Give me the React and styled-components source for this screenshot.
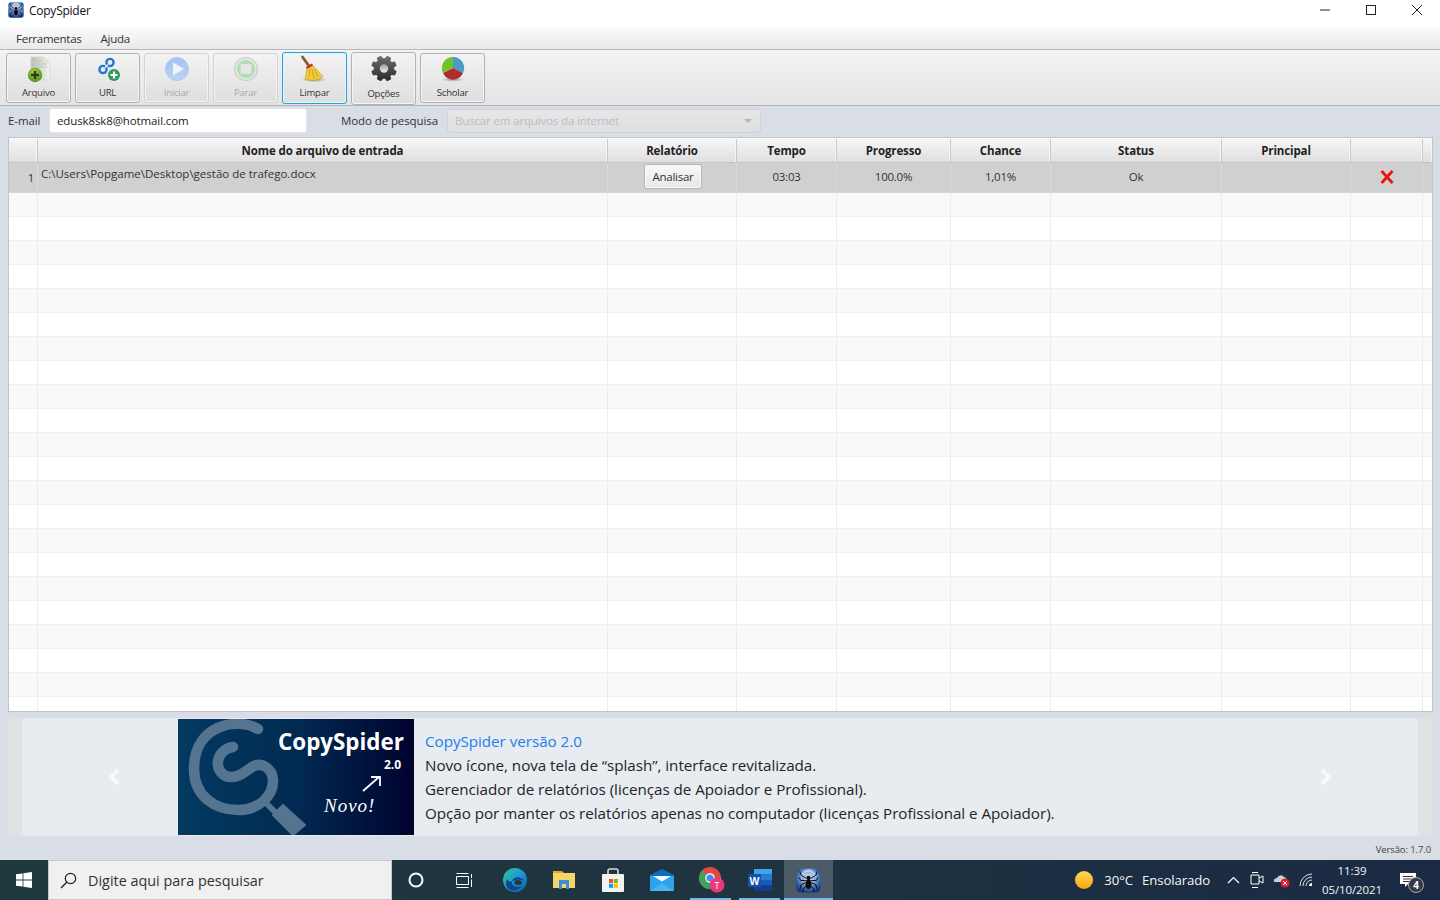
import React from "react";
import styled, { createGlobalStyle } from "styled-components";

const Global = createGlobalStyle`
  html, body { margin: 0; padding: 0; height: 100%; overflow: hidden; }
  * { box-sizing: border-box; }
  body { font-family: "Open Sans", "Noto Sans", "Liberation Sans", sans-serif; color: #333; }
`;

const Page = styled.div`
  width: 1440px; height: 900px; display: flex; flex-direction: column; background: #d9dde5; overflow: hidden;
`;
const TitleBar = styled.div`
  height: 28px; background: #fff; display: flex; align-items: center; padding-left: 8px; flex: none;
`;
const TitleText = styled.span`
  font-size: 12px; color: #111; margin-left: 5px; margin-top: -8px; letter-spacing: -0.25px;
`;
const AppIconWrap = styled.span`
  display: flex; margin-top: -8px;
`;
const WinControls = styled.div`
  margin-left: auto; display: flex; align-self: flex-start;
`;
const WinBtn = styled.span`
  width: 46px; height: 20px; display: flex; align-items: center; justify-content: center; color: #222;
`;
const MenuBar = styled.div`
  height: 22px; flex: none; display: flex; align-items: center; padding: 0 7px 0 16px; gap: 19px;
  background: linear-gradient(#fafafa, #e9e9e9); border-bottom: 1px solid #b8b8b8;
`;
const MenuItem = styled.span`
  font-size: 11.5px; color: #333; letter-spacing: -0.25px;
`;
const Toolbar = styled.div`
  height: 56px; flex: none; display: flex; align-items: flex-start; gap: 4px; padding: 3px 6px 0;
  background: linear-gradient(#f3f3f3, #e4e4e4); border-bottom: 1px solid #b4b4b4;
`;
const ToolBtn = styled.div`
  width: 65px; height: ${p => (p.$tall ? 53 : p.$focus ? 52 : 50)}px; margin-top: ${p => (p.$focus || p.$tall ? -1 : 0)}px;
  display: flex; flex-direction: column; align-items: center;
  border-radius: 3px; border: 1px solid ${p => (p.$focus ? "#1ea3dc" : p.$off ? "#d2d2d2" : "#b2b2b2")};
  box-shadow: ${p => (p.$focus ? "inset 0 0 0 1px #e8f4fa" : "inset 0 0 0 1px #f4f4f4")};
  background: linear-gradient(#f3f3f3, #dedede);
`;
const ToolIcon = styled.svg`
  display: block; flex: none; margin-top: ${p => (p.$shift ? 1 : 0)}px; opacity: ${p => (p.$off ? 0.7 : 1)};
`;
const ToolLabel = styled.span`
  font-size: 9.5px; letter-spacing: -0.2px; line-height: 12px; margin-top: ${p => (p.$low ? 2 : 1)}px; color: ${p => (p.$off ? "#a9a9a9" : "#333")};
`;
const FormRow = styled.div`
  height: 31px; flex: none; display: flex; align-items: center; padding: 2px 0 4px 8px;
`;
const FieldLabel = styled.span`
  font-size: 11.5px; color: #333; letter-spacing: -0.1px; width: ${p => p.$w}px; flex: none;
`;
const EmailInput = styled.div`
  width: 258px; height: 25px; flex: none; margin-right: 34px; background: #fff; border: 1px solid #e4e6ea; border-radius: 3px;
  font-size: 11.5px; letter-spacing: -0.12px; color: #222; padding-left: 7px; line-height: 23px;
`;
const Combo = styled.div`
  width: 314px; height: 24px; margin-top: 1px; flex: none; border-radius: 3px; border: 1px solid #d0d3d6;
  background: linear-gradient(#e6e7e9, #dcdedf); display: flex; align-items: center; justify-content: space-between;
  padding: 0 8px 1px 7px; font-size: 11.5px; color: #bcbdbf; letter-spacing: -0.15px;
`;
const Caret = styled.span`
  width: 0; height: 0; border-left: 4px solid transparent; border-right: 4px solid transparent; border-top: 4px solid #b4b6b8;
`;
const Table = styled.div`
  height: 575px; flex: none; margin: 0 7px 0 8px; border: 1px solid #c4c4c4; background: #fff; overflow: hidden;
`;
const Row = styled.div`
  display: flex; height: ${p => p.$h}px; background: ${p => p.$bg}; border-bottom: 1px solid ${p => p.$line};
`;
const HeadRow = styled(Row)`
  background: linear-gradient(#f6f6f6, #dfdfdf); border-top: 1px solid #fafafa; border-bottom: 1px solid #c6c6c6;
`;
const HeadCell = styled.div`
  width: ${p => p.$w}px; flex: none; border-right: 1px solid #c9c9c9; font-weight: 700; font-size: 11.5px; letter-spacing: -0.12px;
  color: #222; display: flex; align-items: center; justify-content: center; box-shadow: inset -1px 0 0 #f5f5f5;
`;
const Cell = styled.div`
  width: ${p => p.$w}px; flex: none; border-right: 1px solid ${p => p.$line}; font-size: 11.5px; letter-spacing: -0.25px; color: #333;
  display: flex; align-items: center; justify-content: center;
`;
const DataCell = styled(Cell)`
  padding-bottom: 2px;
`;
const IndexCell = styled(Cell)`
  justify-content: flex-end; padding: 0 3px 1px 0;
`;
const PathCell = styled(Cell)`
  justify-content: flex-start; align-items: flex-start; padding: 3px 0 0 3px; letter-spacing: 0;
`;
const SmallBtn = styled.div`
  width: 58px; height: 25px; margin-left: 2px; border: 1px solid #b5b5b5; border-radius: 3px; background: linear-gradient(#f8f8f8, #e7e7e7);
  box-shadow: inset 0 0 0 1px #fbfbfb; display: flex; align-items: center; justify-content: center; font-size: 11.5px; letter-spacing: -0.25px; color: #333;
`;
const CarouselWrap = styled.div`
  height: 118px; flex: none; margin: 6px 8px 0 8px; padding: 0 14px; background: #e0e1e2; display: flex;
`;
const Carousel = styled.div`
  flex: 1; background: #e8ebef; border-radius: 5px; display: flex; align-items: center; position: relative; padding-left: 156px;
`;
const Arrow = styled.svg`
  position: absolute; top: 50px; ${p => (p.$right ? "right: 85px;" : "left: 85px;")}
`;
const Banner = styled.svg`
  display: block; flex: none; margin-right: 11px;
`;
const Notes = styled.div`
  font-size: 15.2px; line-height: 24px; color: #212529; letter-spacing: -0.03px;
`;
const NoteTitle = styled.div`
  color: #1a7ff0;
`;
const Version = styled.div`
  height: 24px; flex: none; display: flex; justify-content: flex-end; align-items: flex-end; padding: 0 9px 4px 0;
  font-size: 9.5px; color: #444; letter-spacing: -0.1px;
`;
const Taskbar = styled.div`
  height: 40px; flex: none; display: flex; align-items: center;
  background: linear-gradient(90deg, #1f3a3f 0%, #1f3340 50%, #1a2a44 100%);
`;
const TaskSlot = styled.div`
  width: ${p => p.$w || 48}px; height: 40px; flex: none; display: flex; align-items: center; justify-content: center; position: relative;
  padding-left: ${p => p.$nudge || 0}px;
  background: ${p => (p.$active ? "rgba(255,255,255,0.2)" : "transparent")};
  ${p => p.$bar && `&::after { content: ""; position: absolute; bottom: 0; height: 2px; background: #76b9ed; left: ${p.$active ? 0 : 4}px; right: ${p.$active ? 0 : 4}px; }`}
`;
const SearchBox = styled.div`
  width: 344px; height: 40px; flex: none; background: #f0f0f0; border: 1px solid #c8c8c8; display: flex; align-items: center; padding-left: 11px;
  font-size: 14.4px; color: #333; gap: 11px;
`;
const Tray = styled.div`
  margin-left: auto; display: flex; align-items: center; height: 40px; color: #fff;
`;
const Weather = styled.span`
  font-size: 13.2px; letter-spacing: -0.1px; margin-left: ${p => p.$ml}px; color: #f4f4f4; white-space: nowrap;
`;
const TrayIcon = styled.span`
  display: flex; margin-left: ${p => p.$ml}px;
`;
const Clock = styled.div`
  width: 70px; margin-left: 4px; text-align: center; font-size: 11.5px; line-height: 19px; letter-spacing: -0.1px; color: #f4f4f4;
`;
const Notif = styled.div`
  margin-left: 13px; margin-right: 24px; position: relative; display: flex;
`;
const Badge = styled.span`
  position: absolute; right: -8px; bottom: -6px; width: 16px; height: 16px; border-radius: 50%; background: #333a45; border: 1px solid #aaa;
  font-size: 10px; font-weight: 700; line-height: 14px; text-align: center; color: #fff;
`;

const COLS = [29, 570, 129, 100, 114, 100, 171, 129, 72, 10];
const HEADS = ["", "Nome do arquivo de entrada", "Relatório", "Tempo", "Progresso", "Chance", "Status", "Principal", "", ""];
const LINE = "#dadada";

function gearPath(cx, cy, ro, ri, n) {
  const pts = [];
  for (let i = 0; i < n; i++) {
    const a = (i / n) * Math.PI * 2 + Math.PI / 8;
    const s = (Math.PI * 2) / n;
    [[-0.34, ri], [-0.2, ro], [0.2, ro], [0.34, ri]].forEach(([k, r]) => {
      const t = a + k * s;
      pts.push(`${(cx + Math.cos(t) * r).toFixed(2)},${(cy + Math.sin(t) * r).toFixed(2)}`);
    });
  }
  return `M${pts.join("L")}Z`;
}

const Spider = ({ s = 16 }) => (
  <svg width={s} height={s} viewBox="0 0 24 24">
    <defs>
      <radialGradient id={`sp${s}`} cx="50%" cy="38%" r="62%">
        <stop offset="0" stopColor="#e6eefa" />
        <stop offset="0.55" stopColor="#6c94d2" />
        <stop offset="1" stopColor="#123a80" />
      </radialGradient>
    </defs>
    <rect x="0.5" y="0.5" width="23" height="23" rx="4" fill={`url(#sp${s})`} />
    <g stroke="#fff" strokeWidth="0.7" fill="none" opacity="0.8">
      <path d="M5 9a7 7 0 0 1 14 0M7 8a5 5 0 0 1 10 0" />
    </g>
    <ellipse cx="12" cy="9.5" rx="2" ry="2" fill="#0a0a0a" />
    <ellipse cx="12" cy="15.5" rx="2.8" ry="4.6" fill="#0a0a0a" />
    <g stroke="#0a0a0a" strokeWidth="0.9" fill="none">
      <path d="M10 10L5 7L3.5 3M14 10L19 7L20.5 3M9.5 12L4.5 12L3 9M14.5 12L19.5 12L21 9M9.5 14L5 16L4 20M14.5 14L19 16L20 20M10 17L7 20L7 23M14 17L17 20L17 23" />
    </g>
  </svg>
);

const ICON = { width: 63, height: 32, viewBox: "0 0 63 32" };

const ArquivoIcon = () => (
  <ToolIcon {...ICON}>
    <defs>
      <linearGradient id="pg" x1="0" y1="0" x2="1" y2="0">
        <stop offset="0" stopColor="#b8c0b4" /><stop offset="1" stopColor="#f3f5ee" />
      </linearGradient>
      <radialGradient id="gb" cx="45%" cy="35%" r="70%">
        <stop offset="0" stopColor="#a8d84a" /><stop offset="1" stopColor="#4c8a10" />
      </radialGradient>
    </defs>
    <path d="M24 3H37L43 9V26H24Z" fill="url(#pg)" stroke="#d0d5cc" strokeWidth="0.7" />
    <path d="M37 3V9H43Z" fill="#dfe4da" />
    <path d="M28 7H36M28 10H40M28 13H40" stroke="#c2c8bc" strokeWidth="1" />
    <circle cx="28" cy="21" r="7.2" fill="url(#gb)" />
    <path d="M28 17V25M24 21H32" stroke="#2d3a20" strokeWidth="2.4" />
  </ToolIcon>
);
const UrlIcon = () => (
  <ToolIcon {...ICON}>
    <g fill="none" stroke="#2478d4" strokeWidth="2.4">
      <circle cx="27" cy="15.5" r="3.6" />
      <circle cx="34" cy="8.5" r="3.6" />
    </g>
    <path d="M29 13.5L32 10.5" stroke="#fff" strokeWidth="1.3" />
    <circle cx="38" cy="21" r="6" fill="#2f9a5c" />
    <path d="M38 17.5V24.5M34.5 21H41.5" stroke="#fff" strokeWidth="2.2" />
  </ToolIcon>
);
const PlayIcon = () => (
  <ToolIcon {...ICON} $off>
    <defs>
      <linearGradient id="pb" x1="0" y1="0" x2="0" y2="1">
        <stop offset="0" stopColor="#7fb4f4" /><stop offset="1" stopColor="#a6cdf8" />
      </linearGradient>
    </defs>
    <circle cx="32" cy="15" r="11.5" fill="url(#pb)" stroke="#a8b4e8" strokeWidth="1" />
    <path d="M28 8.5L39 15L28 21.5Z" fill="#f4f8fe" />
  </ToolIcon>
);
const StopIcon = () => (
  <ToolIcon {...ICON} $off>
    <circle cx="32" cy="15" r="11.5" fill="#dfe4df" stroke="#bcc2bc" strokeWidth="1.2" />
    <circle cx="32" cy="15" r="9" fill="#96d896" />
    <rect x="26.5" y="10" width="11" height="10" rx="1" fill="#e2e2e2" />
  </ToolIcon>
);
const BroomIcon = () => (
  <ToolIcon {...ICON} $shift>
    <defs>
      <radialGradient id="sh"><stop offset="0" stopColor="#555" stopOpacity=".7" /><stop offset="1" stopColor="#888" stopOpacity="0" /></radialGradient>
    </defs>
    <ellipse cx="31" cy="25.5" rx="13" ry="3" fill="url(#sh)" />
    <path d="M19.5 3L26 12" stroke="#8a5a2a" strokeWidth="2.8" strokeLinecap="round" />
    <path d="M24 13.5L29 10.5L40 22.5L36 25L31 26.5L22 25.5Z" fill="#f0cc3c" stroke="#c79a1c" strokeWidth="0.6" />
    <path d="M23.5 14L29.5 10.5" stroke="#c83030" strokeWidth="2.2" />
    <path d="M27 15L26 24M29 15L31 25M31 15L35 23" stroke="#c79a1c" strokeWidth="0.8" />
  </ToolIcon>
);
const GearIcon = () => (
  <ToolIcon {...ICON} $shift>
    <defs>
      <linearGradient id="gr" x1="0" y1="0" x2="0" y2="1"><stop offset="0" stopColor="#6e6e6e" /><stop offset="1" stopColor="#2a2a2a" /></linearGradient>
      <linearGradient id="gh" x1="0" y1="0" x2="0" y2="1"><stop offset="0" stopColor="#a0a0a0" /><stop offset="1" stopColor="#ececec" /></linearGradient>
    </defs>
    <path d={gearPath(32, 14.5, 12.5, 9.8, 8)} fill="url(#gr)" stroke="url(#gr)" strokeWidth="1" strokeLinejoin="round" />
    <circle cx="32" cy="14.5" r="4.2" fill="url(#gh)" />
  </ToolIcon>
);
const PieIcon = () => (
  <ToolIcon {...ICON}>
    <defs>
      <radialGradient id="sh2"><stop offset="0" stopColor="#555" stopOpacity=".7" /><stop offset="1" stopColor="#888" stopOpacity="0" /></radialGradient>
    </defs>
    <ellipse cx="32" cy="25.5" rx="12" ry="2.2" fill="url(#sh2)" />
    <path d="M32 14V3A11 11 0 0 1 42 19Z" fill="#4a9cc4" />
    <path d="M32 14L42 19A11 11 0 0 1 22 19Z" fill="#b02c2c" />
    <path d="M32 14L22 19A11 11 0 0 1 32 3Z" fill="#72c22c" />
  </ToolIcon>
);

const BannerArt = () => (
  <Banner width="236" height="116" viewBox="0 0 236 116">
    <defs>
      <linearGradient id="bn" x1="0" y1="0" x2="1" y2="0">
        <stop offset="0" stopColor="#033a62" /><stop offset="0.5" stopColor="#012a52" /><stop offset="1" stopColor="#00032e" />
      </linearGradient>
    </defs>
    <rect width="236" height="116" fill="url(#bn)" />
    <g fill="none" stroke="#557490" strokeLinecap="round" strokeWidth="10.5">
      <path d="M80 10C60 -2 16 5 16 50C16 78 38 91 60 91C82 91 95 76 95 62C95 50 84 42 74 48C66 53 62 58 53 58C44 58 39 50 40 42C41 35 47 29 55 28" />
    </g>
    <path d="M88 84L100 96" stroke="#557490" strokeWidth="6" />
    <path d="M105 86L127 106L115 116L95 96Z" fill="#557490" stroke="#557490" strokeWidth="2" strokeLinejoin="round" />
    <text x="100" y="31" fontFamily="'Open Sans', sans-serif" fontWeight="700" fontSize="22.4" fill="#fff">CopySpider</text>
    <text x="206" y="50" fontFamily="'Open Sans', sans-serif" fontWeight="700" fontSize="12" fill="#fff">2.0</text>
    <path d="M185 72L201 58M193 58H202V67" fill="none" stroke="#fff" strokeWidth="1.8" />
    <text x="146" y="93" fontFamily="'Liberation Serif', serif" fontStyle="italic" fontSize="19" fill="#fff" letterSpacing="1">Novo!</text>
  </Banner>
);

const Chevron = ({ right }) => (
  <Arrow $right={right} width="14" height="18" viewBox="0 0 14 18">
    <path d={right ? "M3 2L10 9L3 16" : "M11 2L4 9L11 16"} fill="none" stroke="#f7f8f9" strokeWidth="4" />
  </Arrow>
);

const Edge = () => (
  <svg width="24" height="24" viewBox="0 0 24 24">
    <defs>
      <linearGradient id="ed" x1="0" y1="0" x2="1" y2="1">
        <stop offset="0" stopColor="#36c88a" /><stop offset="0.5" stopColor="#1c9ad6" /><stop offset="1" stopColor="#0c5ba8" />
      </linearGradient>
    </defs>
    <circle cx="12" cy="12" r="12" fill="url(#ed)" />
    <path d="M23 15C21 11 17 8.5 13 9.5C9.5 10.5 8 13 9.5 16C11 19 15 19.5 19 18C16.5 22 11 24 7 22C3 20 2 15 4 11C5.5 15 9 13 13 12C18 11 22 12 23 15Z" fill="#0d4a8c" />
    <ellipse cx="15" cy="14.5" rx="4" ry="2.5" fill="#1f3a44" />
  </svg>
);
const Folder = () => (
  <svg width="22" height="20" viewBox="0 0 22 20">
    <path d="M0 1H9L11 3H22V18H0Z" fill="#e8a820" />
    <rect y="3" width="22" height="15" fill="#f6d467" />
    <path d="M6 10H16V19H13V14H9V19H6Z" fill="#3d8ed8" />
  </svg>
);
const Store = () => (
  <svg width="24" height="24" viewBox="0 0 24 24">
    <path d="M7 7V3Q7 1 9 1H15Q17 1 17 3V7" fill="none" stroke="#d8d8d8" strokeWidth="1.6" />
    <rect x="1" y="6" width="22" height="18" rx="1" fill="#f2f2f2" />
    <rect x="8" y="11" width="4" height="4" fill="#f25022" />
    <rect x="12.8" y="11" width="4" height="4" fill="#7fba00" />
    <rect x="8" y="15.8" width="4" height="4" fill="#00a4ef" />
    <rect x="12.8" y="15.8" width="4" height="4" fill="#ffb900" />
  </svg>
);
const Mail = () => (
  <svg width="24" height="22" viewBox="0 0 24 22">
    <path d="M0 6L12 0L24 6V22H0Z" fill="#0f6cbd" />
    <path d="M0 7H24V22H0Z" fill="#2ba4ec" />
    <path d="M3 7H21L12 12.5Z" fill="#f4f8fc" />
    <path d="M0 22L12 14L24 22Z" fill="#5cc0f4" opacity="0.6" />
  </svg>
);
const Chrome = () => (
  <svg width="26" height="26" viewBox="0 0 26 26">
    <circle cx="11" cy="11" r="11" fill="#dd4b3e" />
    <path d="M11 11L1.4 16.5A11 11 0 0 1 3 3.5Z" fill="#3ba55c" />
    <path d="M11 22A11 11 0 0 1 1.4 16.5L11 11L20 16Z" fill="#3ba55c" />
    <path d="M11 11H22A11 11 0 0 1 17 20Z" fill="#f4c430" />
    <circle cx="11" cy="11" r="4.8" fill="#fff" />
    <circle cx="11" cy="11" r="3.6" fill="#4a8af4" />
    <circle cx="18" cy="18" r="7.5" fill="#e83a78" />
    <text x="18" y="21.5" textAnchor="middle" fontSize="9" fontFamily="'Open Sans', sans-serif" fill="#fff">T</text>
  </svg>
);
const Word = () => (
  <svg width="24" height="22" viewBox="0 0 24 22">
    <rect x="6" y="0" width="18" height="5.5" fill="#41a5ee" />
    <rect x="6" y="5.5" width="18" height="5.5" fill="#2b7cd3" />
    <rect x="6" y="11" width="18" height="5.5" fill="#185abd" />
    <rect x="6" y="16.5" width="18" height="5.5" fill="#103f91" />
    <rect x="0" y="5" width="13" height="13" rx="1" fill="#1552ad" />
    <text x="6.5" y="15.5" textAnchor="middle" fontSize="10.5" fontWeight="700" fontFamily="'Liberation Sans', sans-serif" fill="#fff">W</text>
  </svg>
);

const NAME_ROWS = Array.from({ length: 22 }, (_, i) => i);

export default function App() {
  return (
    <Page>
      <Global />
      <TitleBar>
        <AppIconWrap><Spider s={16} /></AppIconWrap>
        <TitleText>CopySpider</TitleText>
        <WinControls>
          <WinBtn><svg width="10" height="10" viewBox="0 0 10 10"><path d="M0 5H10" stroke="#222" /></svg></WinBtn>
          <WinBtn><svg width="10" height="10" viewBox="0 0 10 10"><rect x=".5" y=".5" width="9" height="9" fill="none" stroke="#222" /></svg></WinBtn>
          <WinBtn><svg width="10" height="10" viewBox="0 0 10 10"><path d="M0 0L10 10M10 0L0 10" stroke="#222" /></svg></WinBtn>
        </WinControls>
      </TitleBar>
      <MenuBar>
        <MenuItem>Ferramentas</MenuItem>
        <MenuItem>Ajuda</MenuItem>
      </MenuBar>
      <Toolbar>
        <ToolBtn><ArquivoIcon /><ToolLabel>Arquivo</ToolLabel></ToolBtn>
        <ToolBtn><UrlIcon /><ToolLabel>URL</ToolLabel></ToolBtn>
        <ToolBtn $off><PlayIcon /><ToolLabel $off>Iniciar</ToolLabel></ToolBtn>
        <ToolBtn $off><StopIcon /><ToolLabel $off>Parar</ToolLabel></ToolBtn>
        <ToolBtn $focus><BroomIcon /><ToolLabel>Limpar</ToolLabel></ToolBtn>
        <ToolBtn $tall><GearIcon /><ToolLabel $low>Opções</ToolLabel></ToolBtn>
        <ToolBtn><PieIcon /><ToolLabel>Scholar</ToolLabel></ToolBtn>
      </Toolbar>
      <FormRow>
        <FieldLabel $w={41}>E-mail</FieldLabel>
        <EmailInput>edusk8sk8@hotmail.com</EmailInput>
        <FieldLabel $w={106}>Modo de pesquisa</FieldLabel>
        <Combo>Buscar em arquivos da internet<Caret /></Combo>
      </FormRow>
      <Table>
        <HeadRow $h={25} $line="#c6c6c6">
          {HEADS.map((h, i) => <HeadCell key={i} $w={COLS[i]}>{h}</HeadCell>)}
        </HeadRow>
        <Row $h={30} $bg="#d0d0d0" $line="#d8d8d8">
          <IndexCell $w={COLS[0]} $line={LINE}>1</IndexCell>
          <PathCell $w={COLS[1]} $line={LINE}>C:\Users\Popgame\Desktop\gestão de trafego.docx</PathCell>
          <DataCell $w={COLS[2]} $line={LINE}><SmallBtn>Analisar</SmallBtn></DataCell>
          <DataCell $w={COLS[3]} $line={LINE}>03:03</DataCell>
          <DataCell $w={COLS[4]} $line={LINE}>100.0%</DataCell>
          <DataCell $w={COLS[5]} $line={LINE}>1,01%</DataCell>
          <DataCell $w={COLS[6]} $line={LINE}>Ok</DataCell>
          <DataCell $w={COLS[7]} $line={LINE} />
          <DataCell $w={COLS[8]} $line={LINE}>
            <svg width="14" height="14" viewBox="0 0 14 14"><path d="M1.5 1L12.5 13M12.5 1L1.5 13" stroke="#ea1414" strokeWidth="2.8" /></svg>
          </DataCell>
          <DataCell $w={COLS[9]} $line={LINE} />
        </Row>
        {NAME_ROWS.map(r => (
          <Row key={r} $h={24} $bg={r % 2 ? "#ffffff" : "#f9f9f9"} $line="#f0f0f0">
            {COLS.map((w, i) => <Cell key={i} $w={w} $line="#ececec" />)}
          </Row>
        ))}
      </Table>
      <CarouselWrap>
        <Carousel>
          <Chevron />
          <BannerArt />
          <Notes>
            <NoteTitle>CopySpider versão 2.0</NoteTitle>
            <div>Novo ícone, nova tela de “splash”, interface revitalizada.</div>
            <div>Gerenciador de relatórios (licenças de Apoiador e Profissional).</div>
            <div>Opção por manter os relatórios apenas no computador (licenças Profissional e Apoiador).</div>
          </Notes>
          <Chevron right />
        </Carousel>
      </CarouselWrap>
      <Version>Versão: 1.7.0</Version>
      <Taskbar>
        <TaskSlot>
          <svg width="16" height="16" viewBox="0 0 16 16"><path d="M0 2.3L6.6 1.4V7.6H0ZM7.4 1.3L16 0V7.6H7.4ZM0 8.4H6.6V14.6L0 13.7ZM7.4 8.4H16V16L7.4 14.7Z" fill="#fff" /></svg>
        </TaskSlot>
        <SearchBox>
          <svg width="17" height="17" viewBox="0 0 17 17"><circle cx="10.5" cy="6.5" r="5.2" fill="none" stroke="#222" strokeWidth="1.2" /><path d="M6.8 10.2L1 16" stroke="#222" strokeWidth="1.4" /></svg>
          Digite aqui para pesquisar
        </SearchBox>
        <TaskSlot><svg width="16" height="16" viewBox="0 0 16 16"><circle cx="8" cy="8" r="6.5" fill="none" stroke="#fff" strokeWidth="2" /></svg></TaskSlot>
        <TaskSlot>
          <svg width="17" height="15" viewBox="0 0 17 15"><path d="M0.5 3.5H12.5V11.5H0.5ZM0.5 0.5H12.5M0.5 14.5H12.5M15.5 1V5M15.5 6.5V14" fill="none" stroke="#fff" /></svg>
        </TaskSlot>
        <TaskSlot $w={2} />
        <TaskSlot $w={49}><Edge /></TaskSlot>
        <TaskSlot $w={49}><Folder /></TaskSlot>
        <TaskSlot $w={49}><Store /></TaskSlot>
        <TaskSlot $w={49}><Mail /></TaskSlot>
        <TaskSlot $w={49} $bar $nudge={3}><Chrome /></TaskSlot>
        <TaskSlot $w={49} $bar><Word /></TaskSlot>
        <TaskSlot $w={49} $bar $active><Spider s={25} /></TaskSlot>
        <Tray>
          <svg width="18" height="18" viewBox="0 0 18 18"><defs><linearGradient id="sn" x1="0" y1="0" x2="0" y2="1"><stop offset="0" stopColor="#ffd75a" /><stop offset="1" stopColor="#f5a70f" /></linearGradient></defs><circle cx="9" cy="9" r="9" fill="url(#sn)" /></svg>
          <Weather $ml={11}>30°C</Weather>
          <Weather $ml={9}>Ensolarado</Weather>
          <TrayIcon $ml={17}><svg width="13" height="8" viewBox="0 0 13 8"><path d="M1 7L6.5 1.5L12 7" fill="none" stroke="#fff" strokeWidth="1.2" /></svg></TrayIcon>
          <TrayIcon $ml={10}><svg width="14" height="18" viewBox="0 0 14 18"><path d="M2 1.5H8M2 16.5H8M1 4V13H9V4ZM9 7L13 5V12L9 10" fill="none" stroke="#fff" /></svg></TrayIcon>
          <TrayIcon $ml={9}><svg width="17" height="15" viewBox="0 0 17 15"><path d="M1 9A3 3 0 0 1 4 5A4 4 0 0 1 11 4A3 3 0 0 1 13 9Z" fill="#c9ced4" /><circle cx="12" cy="10" r="4.5" fill="#e21b2c" /><path d="M10 8L14 12M14 8L10 12" stroke="#fff" /></svg></TrayIcon>
          <TrayIcon $ml={9}><svg width="14" height="14" viewBox="0 0 14 14"><path d="M1 13A12 12 0 0 1 13 1M4 13A9 9 0 0 1 13 4M7 13A6 6 0 0 1 13 7" fill="none" stroke="#fff" strokeWidth="1" opacity="0.85" /><path d="M10 13A3 3 0 0 1 13 10V13Z" fill="#fff" /></svg></TrayIcon>
          <Clock>11:39<br />05/10/2021</Clock>
          <Notif>
            <svg width="16" height="14" viewBox="0 0 16 14"><path d="M0 0H16V11H8L5 14V11H0Z" fill="#fff" /><path d="M3 3.5H13M3 6H13M3 8.5H10" stroke="#333" /></svg>
            <Badge>4</Badge>
          </Notif>
        </Tray>
      </Taskbar>
    </Page>
  );
}
